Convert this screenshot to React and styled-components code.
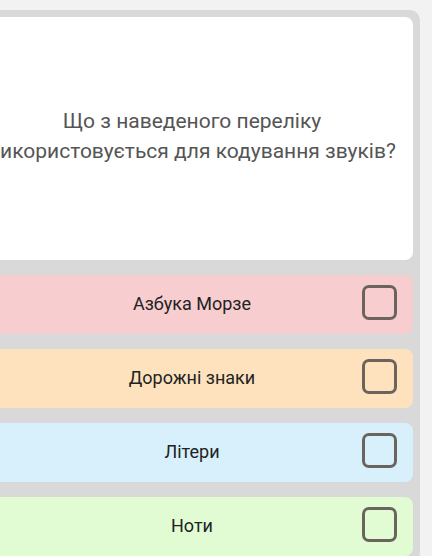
import React from "react";
import styled, { createGlobalStyle } from "styled-components";

const GlobalStyle = createGlobalStyle`
  html, body {
    margin: 0;
    padding: 0;
    background: #f2f2f2;
    overflow: hidden;
  }
  body {
    font-family: Roboto, "Noto Sans", Arial, sans-serif;
  }
`;

const Panel = styled.div`
  margin: 10px 0 0 -36px;
  width: 456px;
  padding: 7px;
  box-sizing: border-box;
  background: #d9d9d9;
  border-radius: 10px;
  display: flex;
  flex-direction: column;
  gap: 15px;
`;

const QuestionCard = styled.div`
  height: 243px;
  background: #ffffff;
  border-radius: 8px;
  display: flex;
  align-items: center;
  justify-content: center;
  text-align: center;
  padding-bottom: 6px;
  box-sizing: border-box;
`;

const QuestionText = styled.p`
  margin: 0;
  font-size: 21px;
  line-height: 30px;
  color: #555555;
  white-space: nowrap;
`;

const Option = styled.div`
  position: relative;
  height: 59px;
  border-radius: 8px;
  background: ${(p) => p.color};
  display: flex;
  align-items: center;
  justify-content: center;
  padding-bottom: 2px;
  box-sizing: border-box;
`;

const OptionLabel = styled.span`
  font-size: 18px;
  color: #222222;
`;

const Checkbox = styled.span`
  position: absolute;
  right: 16px;
  top: 10px;
  width: 35px;
  height: 35px;
  box-sizing: border-box;
  border: 3px solid #6b635e;
  border-radius: 7px;
`;

const options = [
  { label: "Азбука Морзе", color: "#f7cdd0" },
  { label: "Дорожні знаки", color: "#fde2bd" },
  { label: "Літери", color: "#d7f0fb" },
  { label: "Ноти", color: "#e1fbd3" },
];

const App = () => {
  return (
    <>
      <GlobalStyle />
      <Panel>
        <QuestionCard>
          <QuestionText>
            Що з наведеного переліку
            <br />
            використовується для кодування звуків?
          </QuestionText>
        </QuestionCard>
        {options.map((o) => (
          <Option key={o.label} color={o.color}>
            <OptionLabel>{o.label}</OptionLabel>
            <Checkbox />
          </Option>
        ))}
      </Panel>
    </>
  );
};

export default App;
